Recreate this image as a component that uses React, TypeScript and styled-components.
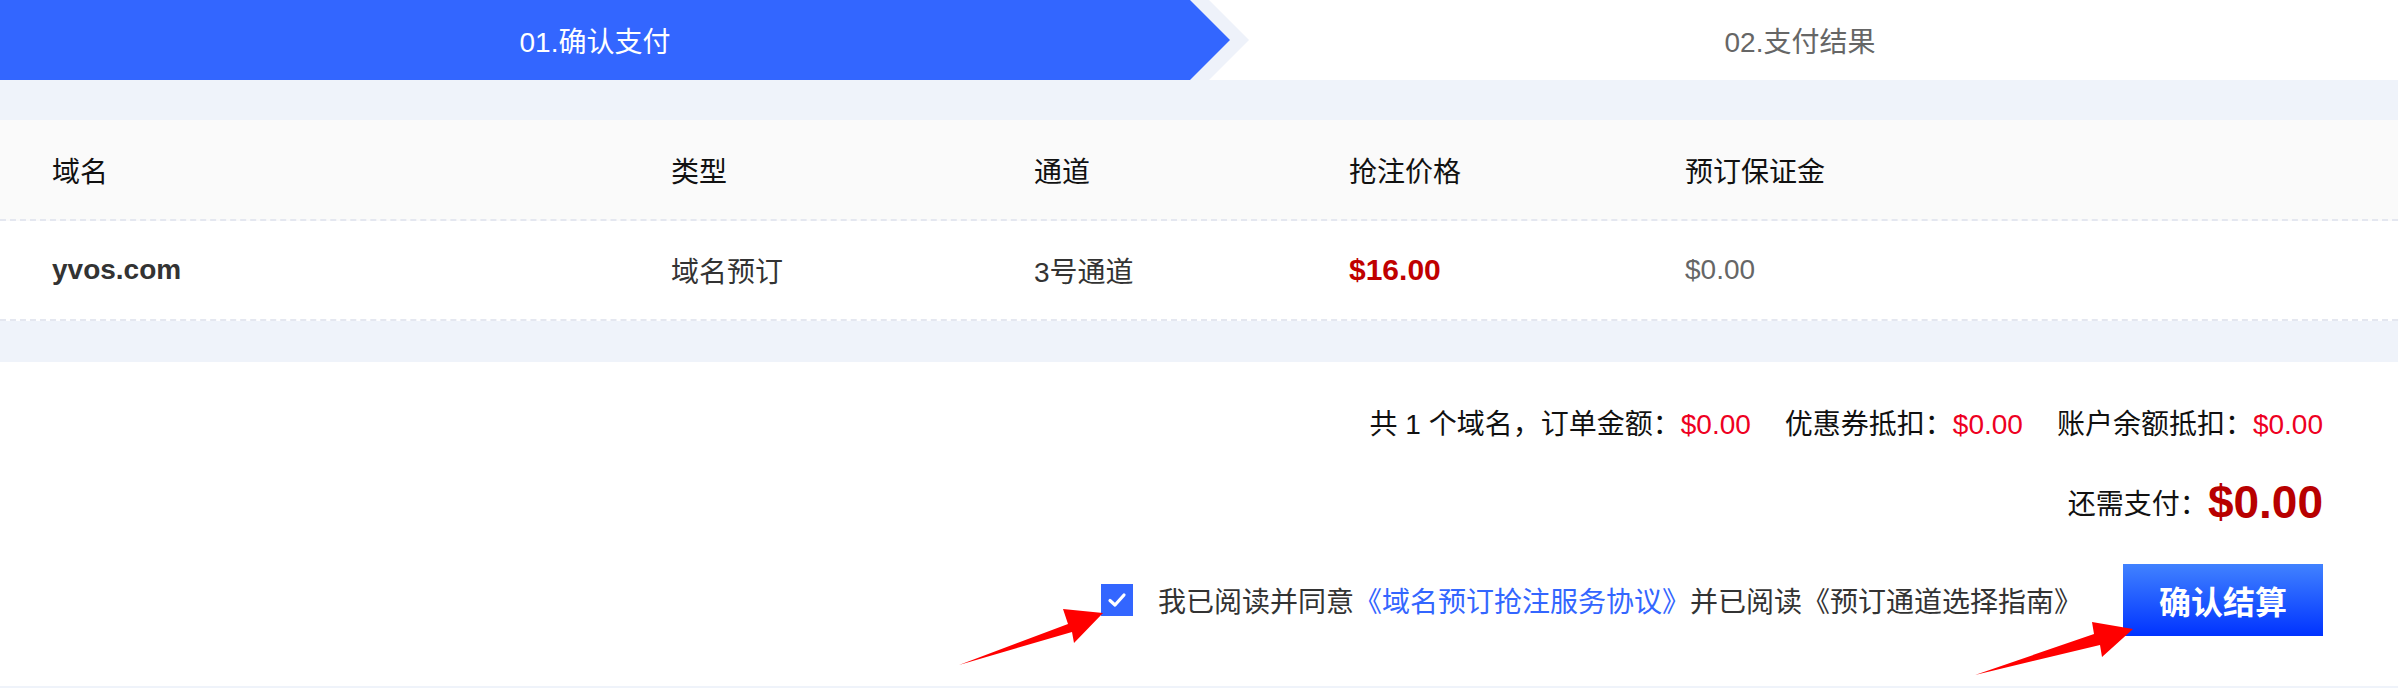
import React, { useState } from 'react';
import styled, { createGlobalStyle } from 'styled-components';

const GlobalStyle = createGlobalStyle`
  html, body {
    margin: 0;
    padding: 0;
    background: #eff3fa;
  }
  * {
    box-sizing: border-box;
  }
`;

const columns = [
  { key: 'domain', title: '域名' },
  { key: 'type', title: '类型' },
  { key: 'channel', title: '通道' },
  { key: 'price', title: '抢注价格' },
  { key: 'deposit', title: '预订保证金' },
];

const App: React.FC = () => {
  const [agreed, setAgreed] = useState<boolean>(true);

  return (
    <>
      <GlobalStyle />
      <Page>
        <Stepper>
          <StepActive>01.确认支付</StepActive>
          <StepNext>02.支付结果</StepNext>
        </Stepper>

        <Table>
          <HeaderRow>
            {columns.map((c) => (
              <HeadCell key={c.key}>{c.title}</HeadCell>
            ))}
          </HeaderRow>
          <BodyRow>
            <Cell $bold>yvos.com</Cell>
            <Cell>域名预订</Cell>
            <Cell>3号通道</Cell>
            <Price>$16.00</Price>
            <Cell $muted>$0.00</Cell>
          </BodyRow>
        </Table>

        <Summary>
          <SummaryLine>
            <Group>
              共 1 个域名，订单金额：<Amount>$0.00</Amount>
            </Group>
            <Group>
              优惠券抵扣：<Amount>$0.00</Amount>
            </Group>
            <Group>
              账户余额抵扣：<Amount>$0.00</Amount>
            </Group>
          </SummaryLine>
          <TotalLine>
            还需支付：<Total>$0.00</Total>
          </TotalLine>
          <ActionRow>
            <Agree onClick={() => setAgreed(!agreed)}>
              <CheckBox $checked={agreed}>
                {agreed && (
                  <svg width="24" height="24" viewBox="0 0 24 24">
                    <polyline
                      points="5,12.5 10,17 19,7"
                      fill="none"
                      stroke="#fff"
                      strokeWidth="3.2"
                      strokeLinecap="round"
                      strokeLinejoin="round"
                    />
                  </svg>
                )}
              </CheckBox>
              我已阅读并同意
              <Link>《域名预订抢注服务协议》</Link>
              并已阅读《预订通道选择指南》
            </Agree>
            <SubmitButton>确认结算</SubmitButton>
          </ActionRow>
        </Summary>

        <Annotations width="2398" height="688" viewBox="0 0 2398 688">
          <polygon
            points="959,665 1068,624 1063,609 1103,613 1074,643 1072,632"
            fill="#ff0000"
          />
          <polygon
            points="1975,675 2094,634 2092,622 2133,629 2102,657 2100,645"
            fill="#ff0000"
          />
        </Annotations>
      </Page>
    </>
  );
};

export default App;

const Page = styled.div`
  position: relative;
  width: 2398px;
  min-height: 688px;
  font-family: 'Liberation Sans', 'Noto Sans CJK SC', sans-serif;
  background: #eff3fa;
`;

const Stepper = styled.div`
  display: flex;
  height: 80px;
  background: #fff;
  font-size: 28px;
`;

const StepActive = styled.div`
  position: relative;
  flex: 0 0 1190px;
  display: flex;
  align-items: center;
  justify-content: center;
  background: #3366ff;
  color: #fff;

  &::before {
    content: '';
    position: absolute;
    top: 0;
    left: 100%;
    width: 59px;
    height: 100%;
    background: #eef2fa;
    clip-path: polygon(0 0, 19px 0, 100% 50%, 19px 100%, 0 100%);
  }

  &::after {
    content: '';
    position: absolute;
    top: 0;
    left: 100%;
    width: 40px;
    height: 100%;
    background: #3366ff;
    clip-path: polygon(0 0, 100% 50%, 0 100%);
  }
`;

const StepNext = styled.div`
  flex: 1;
  display: flex;
  align-items: center;
  justify-content: center;
  padding-left: 12px;
  color: #666;
`;

const Table = styled.div`
  margin-top: 40px;
  background: #fff;
`;

const grid = `
  display: grid;
  grid-template-columns: 619px 363px 315px 336px 1fr;
  align-items: center;
  padding: 0 52px;
  border-bottom: 2px dashed #e4e7f0;
`;

const HeaderRow = styled.div`
  ${grid};
  height: 101px;
  background: #fafafa;
`;

const BodyRow = styled.div`
  ${grid};
  height: 100px;
`;

const HeadCell = styled.div`
  font-size: 28px;
  color: #111;
`;

const Cell = styled.div<{ $bold?: boolean; $muted?: boolean }>`
  font-size: 28px;
  font-weight: ${(p) => (p.$bold ? 700 : 400)};
  color: ${(p) => (p.$muted ? '#666' : '#333')};
`;

const Price = styled.div`
  font-size: 30px;
  font-weight: 700;
  color: #c00000;
`;

const Summary = styled.div`
  margin-top: 41px;
  height: 324px;
  background: #fff;
  display: flex;
  flex-direction: column;
  align-items: flex-end;
  padding: 40px 75px 0 0;
`;

const SummaryLine = styled.div`
  display: flex;
  gap: 34px;
  height: 40px;
  align-items: center;
  font-size: 28px;
  color: #111;
`;

const Group = styled.span`
  white-space: nowrap;
`;

const Amount = styled.span`
  color: #ee0022;
`;

const TotalLine = styled.div`
  display: flex;
  align-items: center;
  height: 60px;
  margin-top: 30px;
  font-size: 28px;
  color: #111;
`;

const Total = styled.span`
  font-size: 46px;
  font-weight: 700;
  color: #b80000;
`;

const ActionRow = styled.div`
  display: flex;
  align-items: center;
  gap: 41px;
  margin-top: 32px;
`;

const Agree = styled.label`
  display: flex;
  align-items: center;
  font-size: 28px;
  color: #333;
  cursor: pointer;
  white-space: nowrap;
`;

const CheckBox = styled.span<{ $checked: boolean }>`
  flex: 0 0 32px;
  display: flex;
  align-items: center;
  justify-content: center;
  width: 32px;
  height: 32px;
  margin-right: 25px;
  background: ${(p) => (p.$checked ? '#3366ff' : '#fff')};
  border: ${(p) => (p.$checked ? 'none' : '2px solid #ccc')};
`;

const Link = styled.span`
  color: #3366ff;
`;

const SubmitButton = styled.button`
  flex: 0 0 200px;
  width: 200px;
  height: 72px;
  border: none;
  background: linear-gradient(180deg, #4182ff 0%, #0033ff 100%);
  color: #fff;
  font-family: inherit;
  font-size: 32px;
  font-weight: 700;
  cursor: pointer;
`;

const Annotations = styled.svg`
  position: absolute;
  top: 0;
  left: 0;
  pointer-events: none;
`;
